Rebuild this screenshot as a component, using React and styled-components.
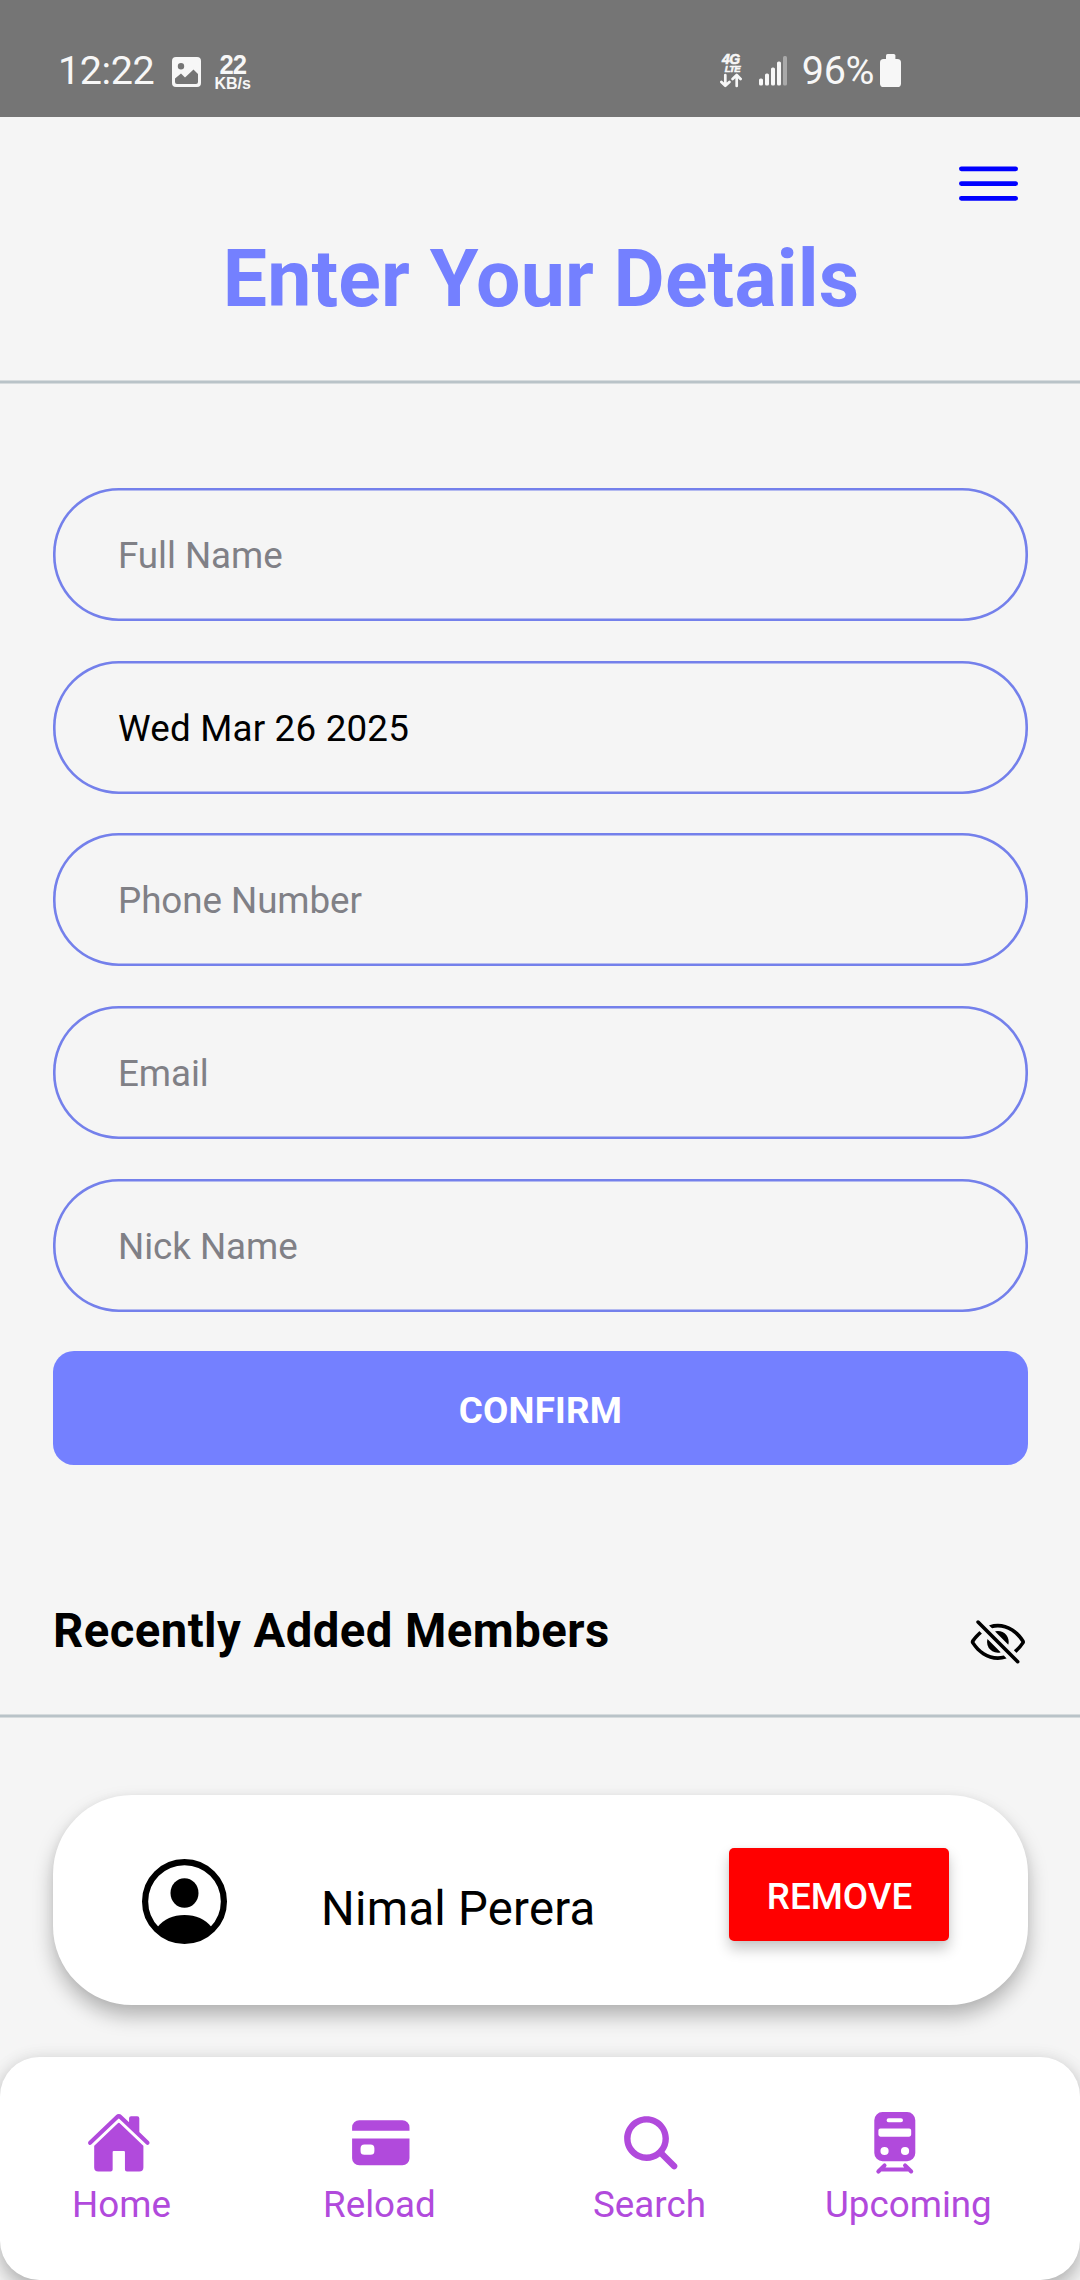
import React from "react";
import styled, { createGlobalStyle } from "styled-components";
import { IoHome, IoCard, IoSearch, IoSubway, IoEyeOffOutline } from "react-icons/io5";

const GlobalStyle = createGlobalStyle`
  * { box-sizing: border-box; }
  body { margin: 0; background: #f5f5f5; }
`;

const Screen = styled.div`
  width: 1080px;
  height: 2280px;
  display: flex;
  flex-direction: column;
  overflow: hidden;
  background: #f5f5f5;
  color: #000;
  font-family: Roboto, "Noto Sans", sans-serif;
  font-size: 36.75px;
  svg { display: block; flex: none; }
`;

/* ---------- status bar ---------- */
const StatusBar = styled.header`
  height: 117px;
  flex: none;
  background: #757575;
  color: #f7f7f7;
  display: flex;
  justify-content: space-between;
  align-items: flex-start;
  padding: 47px 179px 0 58px;
`;
const StatusGroup = styled.div`
  display: flex;
  align-items: center;
  height: 47px;
`;
const StatusText = styled.span`
  font-size: 39.5px;
  line-height: 47px;
  letter-spacing: -0.4px;
`;
const PhotoIcon = styled.svg`
  margin: 2px 0 0 18px;
`;
const Speed = styled.div`
  font-family: "Liberation Sans", Arial, sans-serif;
  font-weight: 700;
  display: flex;
  flex-direction: column;
  align-items: center;
  margin-left: 13px;
`;
const SpeedValue = styled.span`
  font-size: 28.5px;
  line-height: 26px;
  letter-spacing: -1px;
  transform: scaleX(0.9);
`;
const SpeedUnit = styled.span`
  font-size: 16px;
  line-height: 14px;
`;
const Network = styled.div`
  width: 24px;
  margin-right: 16px;
  display: flex;
  flex-direction: column;
  align-items: center;
  font-family: "Liberation Sans", Arial, sans-serif;
  font-weight: 700;
  font-style: italic;
  -webkit-text-stroke: 0.6px #f7f7f7;
`;
const NetworkLine = styled.span`
  font-size: ${(p) => p.$size}px;
  line-height: ${(p) => p.$line}px;
  letter-spacing: -0.6px;
  padding-left: ${(p) => p.$indent || 0}px;
`;
const SignalIcon = styled.svg`
  margin: 0 14px 0 0;
`;
const BatteryIcon = styled.svg`
  margin-left: 6px;
`;

/* ---------- header ---------- */
const Header = styled.div`
  height: 263px;
  flex: none;
  display: flex;
  flex-direction: column;
  padding-top: 48px;
`;
const MenuButton = styled.div`
  align-self: flex-end;
  margin-right: 62px;
  height: 37px;
`;
const Title = styled.h1`
  margin: 31px 0 0;
  padding-left: 2px;
  text-align: center;
  color: #7480ff;
  font-size: 78.75px;
  line-height: 92px;
  font-weight: 700;
  letter-spacing: 0.15px;
`;
const Divider = styled.div`
  height: 4px;
  flex: none;
  background: #b9c3c8;
  border: solid #d6dbdd;
  border-width: 1px 0;
`;

/* ---------- form ---------- */
const Form = styled.form`
  display: flex;
  flex-direction: column;
  gap: 39.75px;
  padding: 103.75px 52px 0 53px;
`;
const Field = styled.div`
  height: 133px;
  border-radius: 65.6px;
  box-shadow: inset 0 0 0 2.6px #7480eb;
  display: flex;
  align-items: center;
  padding: ${(p) => (p.$filled ? "2.5px" : "1.5px")} 65px 0;
  color: ${(p) => (p.$filled ? "#000" : "#808086")};
  letter-spacing: ${(p) => (p.$filled ? "0.2px" : "-0.05px")};
`;
const ConfirmButton = styled.div`
  height: 114px;
  margin-top: -0.75px;
  border-radius: 21px;
  background: #7480ff;
  color: #fff;
  font-weight: 700;
  letter-spacing: 0.2px;
  display: flex;
  align-items: center;
  justify-content: center;
  padding-top: 5px;
`;

/* ---------- members ---------- */
const SectionHead = styled.div`
  height: 249px;
  flex: none;
  display: flex;
  justify-content: space-between;
  align-items: flex-start;
  padding: 138px 53px 0 53px;
`;
const SectionTitle = styled.h2`
  margin: 1px 0 0;
  font-size: 47.25px;
  line-height: 55px;
  font-weight: 700;
  letter-spacing: 0.45px;
`;
const EyeButton = styled.div`
  margin-top: 10px;
`;
const MemberCard = styled.div`
  margin: 77px 52px 0 53px;
  height: 210px;
  flex: none;
  border-radius: 79px;
  background: #fff;
  box-shadow: 0 11px 20px rgba(0, 0, 0, 0.27), 0 0 8px rgba(0, 0, 0, 0.04);
  display: flex;
  align-items: flex-start;
  padding: 53px 79px 0 88px;
`;
const Avatar = styled.svg`
  margin-top: 10px;
`;
const MemberName = styled.span`
  font-size: 47.25px;
  line-height: 55px;
  letter-spacing: 0.25px;
  margin: 34px auto 0 93px;
`;
const RemoveButton = styled.div`
  width: 220px;
  height: 93px;
  border-radius: 5px;
  background: #ff0000;
  color: #fff;
  font-weight: 500;
  display: flex;
  align-items: center;
  justify-content: center;
  padding: 4px 0 0 1px;
  box-shadow: 0 8px 14px rgba(0, 0, 0, 0.22), 0 0 4px rgba(0, 0, 0, 0.05);
`;

/* ---------- bottom navigation ---------- */
const NavBar = styled.nav`
  margin-top: auto;
  height: 223px;
  flex: none;
  border-radius: 39.4px;
  background: #fff;
  box-shadow: 0 10px 20px rgba(0, 0, 0, 0.25), 0 0 18px rgba(0, 0, 0, 0.07);
  display: grid;
  grid-template-columns: 251px 270px 232px auto;
  padding: 53px 0 0 72px;
`;
const NavItem = styled.div`
  display: flex;
  flex-direction: column;
  align-items: flex-start;
  color: #b14adc;
  line-height: 43px;
  svg { margin-left: ${(p) => p.$inset}px; margin-bottom: 7px; }
`;

const FIELDS = [
  { text: "Full Name" },
  { text: "Wed Mar 26 2025", filled: true },
  { text: "Phone Number" },
  { text: "Email" },
  { text: "Nick Name" },
];

const TABS = [
  { label: "Home", Icon: IoHome, inset: 14 },
  { label: "Reload", Icon: IoCard, inset: 25 },
  { label: "Search", Icon: IoSearch, inset: 25 },
  { label: "Upcoming", Icon: IoSubway, inset: 37 },
];

export default function App() {
  return (
    <Screen>
      <GlobalStyle />
      <StatusBar>
        <StatusGroup>
          <StatusText>12:22</StatusText>
          <PhotoIcon width="29" height="30" viewBox="0 0 29 30" fill="#f7f7f7">
            <path
              fillRule="evenodd"
              d="M4 0H25Q29 0 29 4V26Q29 30 25 30H4Q0 30 0 26V4Q0 0 4 0ZM9 6A3.2 3.2 0 1 0 9 12.4A3.2 3.2 0 1 0 9 6ZM3 21.5V25Q3 27 5 27H24Q26 27 26 25V17L21.5 12.5L13 20.5L9 16.5Z"
            />
          </PhotoIcon>
          <Speed>
            <SpeedValue>22</SpeedValue>
            <SpeedUnit>KB/s</SpeedUnit>
          </Speed>
        </StatusGroup>
        <StatusGroup>
          <Network>
            <NetworkLine $size={14} $line={12}>4G</NetworkLine>
            <NetworkLine $size={9.5} $line={8} $indent={3}>LTE</NetworkLine>
            <svg width="22" height="15" viewBox="0 0 22 15" fill="none" stroke="#f7f7f7" strokeWidth="2.7" strokeLinecap="round" strokeLinejoin="round">
              <path d="M5.3 2V12.5M1.4 9L5.3 12.8L9.4 9M16.7 13V2.5M12.6 6L16.7 2L20.6 6" />
            </svg>
          </Network>
          <SignalIcon width="29" height="30" viewBox="0 0 29 30" fill="#f7f7f7">
            <rect x="0" y="22.5" width="4" height="7" rx="1.6" />
            <rect x="6" y="17.5" width="4" height="12" rx="1.6" />
            <rect x="12" y="11.5" width="4" height="18" rx="1.6" />
            <rect x="18" y="5.5" width="4" height="24" rx="1.6" />
            <rect x="24" y="0" width="4" height="29.5" rx="1.6" opacity="0.4" />
          </SignalIcon>
          <StatusText>96%</StatusText>
          <BatteryIcon width="21" height="33" viewBox="0 0 21 33" fill="#f7f7f7">
            <rect x="6" y="0" width="9.4" height="8" rx="1.6" />
            <rect x="0" y="5" width="21" height="28" rx="3.6" />
          </BatteryIcon>
        </StatusGroup>
      </StatusBar>

      <Header>
        <MenuButton>
          <svg width="59" height="37" viewBox="0 0 59 37" fill="none" stroke="#0000ff" strokeWidth="4.8" strokeLinecap="round">
            <path d="M2.4 3.8H56.6M2.4 18.6H56.6M2.4 33.3H56.6" />
          </svg>
        </MenuButton>
        <Title>Enter Your Details</Title>
      </Header>
      <Divider />

      <Form>
        {FIELDS.map((f) => (
          <Field key={f.text} $filled={f.filled}>{f.text}</Field>
        ))}
        <ConfirmButton>CONFIRM</ConfirmButton>
      </Form>

      <SectionHead>
        <SectionTitle>Recently Added Members</SectionTitle>
        <EyeButton>
          <IoEyeOffOutline size={57.75} />
        </EyeButton>
      </SectionHead>
      <Divider />

      <MemberCard>
        <Avatar width="87" height="87" viewBox="0 0 87 87">
          <circle cx="43.5" cy="43.5" r="39.4" fill="none" stroke="#000" strokeWidth="6.2" />
          <ellipse cx="43.5" cy="35" rx="14" ry="14.8" />
          <path d="M16.5 69C23 61 32 57 43.5 57C55 57 64 61 70.5 69C64 79 55 84 43.5 84C32 84 23 79 16.5 69Z" />
        </Avatar>
        <MemberName>Nimal Perera</MemberName>
        <RemoveButton>REMOVE</RemoveButton>
      </MemberCard>

      <NavBar>
        {TABS.map(({ label, Icon, inset }) => (
          <NavItem key={label} $inset={inset}>
            <Icon size={65.6} />
            {label}
          </NavItem>
        ))}
      </NavBar>
    </Screen>
  );
}
